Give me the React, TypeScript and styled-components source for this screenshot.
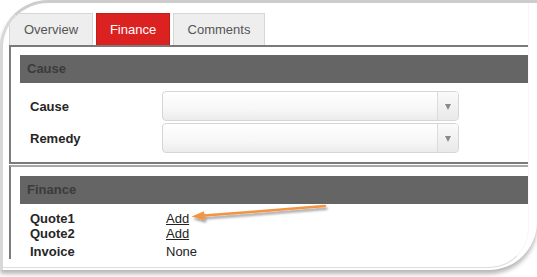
import React from 'react'
import styled, { createGlobalStyle } from 'styled-components'

const GlobalStyle = createGlobalStyle`
  html, body {
    margin: 0;
    padding: 0;
    background: #ffffff;
  }
  body {
    font-family: "Liberation Sans", Arial, sans-serif;
    font-size: 13px;
    color: #222;
  }
`

const Page = styled.div`
  position: relative;
  width: 537px;
  height: 277px;
  overflow: hidden;
`

const Card = styled.div`
  width: 537px;
  height: 270px;
  box-sizing: border-box;
  background: #ffffff;
  border-top: 3px solid #cdcdcd;
  border-left: 3px solid #d8d8d8;
  border-radius: 48px 0 48px 0;
  box-shadow: 0 4px 4px rgba(0, 0, 0, 0.28);
`

const Frame = styled.div`
  width: 526px;
  height: 265px;
  box-sizing: border-box;
  border-right: 1px solid #f6f6f6;
  border-bottom: 1px solid #dcdcdc;
  border-radius: 45px 0 40px 0;
  overflow: hidden;
  padding: 10px 0 0 6px;
`

const Tabs = styled.div`
  display: flex;
  gap: 3px;
  height: 32px;
`

const Tab = styled.div<{ $active?: boolean; $w: number }>`
  width: ${p => p.$w}px;
  height: 32px;
  box-sizing: border-box;
  border: 1px solid ${p => (p.$active ? '#c41b1b' : '#d6d6d6')};
  border-bottom: none;
  background: ${p => (p.$active ? '#dc2121' : '#eeeeee')};
  color: ${p => (p.$active ? '#ffffff' : '#555555')};
  text-align: center;
  line-height: 31px;
  font-size: 13px;
`

const Panel = styled.div<{ $first?: boolean }>`
  border-left: 2px solid #7c7c7c;
  border-top: 2px solid ${p => (p.$first ? '#7a7a7a' : '#a8a8a8')};
  border-bottom: ${p => (p.$first ? '2px solid #7a7a7a' : 'none')};
  margin-top: ${p => (p.$first ? 0 : 1)}px;
  padding: ${p => (p.$first ? '8px 0 9px 9px' : '9px 0 0 9px')};
`

const Header = styled.div`
  height: 28px;
  line-height: 28px;
  background: #656565;
  color: #3b3b3b;
  font-weight: bold;
  font-size: 13px;
  padding-left: 7px;
`

const FormRows = styled.div`
  display: flex;
  flex-direction: column;
  gap: 2px;
  margin-top: 8px;
  padding-left: 10px;
`

const FormRow = styled.div`
  display: flex;
  align-items: center;
  height: 30px;
`

const Label = styled.div<{ $w: number }>`
  width: ${p => p.$w}px;
  flex: none;
  font-weight: bold;
  color: #262626;
`

const Select = styled.div`
  width: 297px;
  height: 30px;
  box-sizing: border-box;
  display: flex;
  border: 1px solid #d6d6d6;
  border-radius: 4px;
  background: linear-gradient(#ffffff, #f7f7f7 60%, #ececec);
  overflow: hidden;
`

const SelectValue = styled.div`
  flex: 1;
`

const SelectArrow = styled.div`
  width: 20px;
  border-left: 1px solid #dcdcdc;
  background: linear-gradient(#fafafa, #e9e9e9);
  display: flex;
  align-items: center;
  justify-content: center;

  &::after {
    content: '';
    border-left: 3.5px solid transparent;
    border-right: 3.5px solid transparent;
    border-top: 6px solid #8a8a8a;
    margin-top: 1px;
  }
`

const InfoRows = styled.div`
  margin-top: 7px;
  padding-left: 10px;
`

const InfoRow = styled.div<{ $gap?: number }>`
  display: flex;
  height: 15px;
  line-height: 15px;
  margin-top: ${p => p.$gap || 0}px;
`

const Value = styled.span<{ $link?: boolean }>`
  color: #222;
  text-decoration: ${p => (p.$link ? 'underline' : 'none')};
`

const Annotation = styled.svg`
  position: absolute;
  left: 0;
  top: 0;
  pointer-events: none;
`

export default function App() {
  const tabs = [
    { name: 'Overview', w: 84 },
    { name: 'Finance', w: 74, active: true },
    { name: 'Comments', w: 92 },
  ]

  const causeFields = ['Cause', 'Remedy']

  const financeRows = [
    { label: 'Quote1', value: 'Add', link: true },
    { label: 'Quote2', value: 'Add', link: true },
    { label: 'Invoice', value: 'None', gap: 3 },
  ]

  return (
    <Page>
      <GlobalStyle />
      <Card>
        <Frame>
          <Tabs>
            {tabs.map(t => (
              <Tab key={t.name} $w={t.w} $active={t.active}>{t.name}</Tab>
            ))}
          </Tabs>
          <Panel $first>
            <Header>Cause</Header>
            <FormRows>
              {causeFields.map(f => (
                <FormRow key={f}>
                  <Label $w={132}>{f}</Label>
                  <Select>
                    <SelectValue />
                    <SelectArrow />
                  </Select>
                </FormRow>
              ))}
            </FormRows>
          </Panel>
          <Panel>
            <Header>Finance</Header>
            <InfoRows>
              {financeRows.map(r => (
                <InfoRow key={r.label} $gap={r.gap}>
                  <Label $w={136}>{r.label}</Label>
                  <Value $link={r.link}>{r.value}</Value>
                </InfoRow>
              ))}
            </InfoRows>
          </Panel>
        </Frame>
      </Card>
      {/* callout arrow drawn over the page */}
      <Annotation width="537" height="277" viewBox="0 0 537 277">
        <defs>
          <filter id="arrowShadow" x="-10%" y="-50%" width="120%" height="200%">
            <feDropShadow dx="1.5" dy="2.5" stdDeviation="1.2" floodColor="#000" floodOpacity="0.4" />
          </filter>
        </defs>
        <g filter="url(#arrowShadow)">
          <line x1="325" y1="206" x2="201" y2="215.8" stroke="#f39443" strokeWidth="2.5" strokeLinecap="round" />
          <polygon points="191.5,216.6 204,211.3 204.7,220.3" fill="#f39443" />
        </g>
      </Annotation>
    </Page>
  )
}
